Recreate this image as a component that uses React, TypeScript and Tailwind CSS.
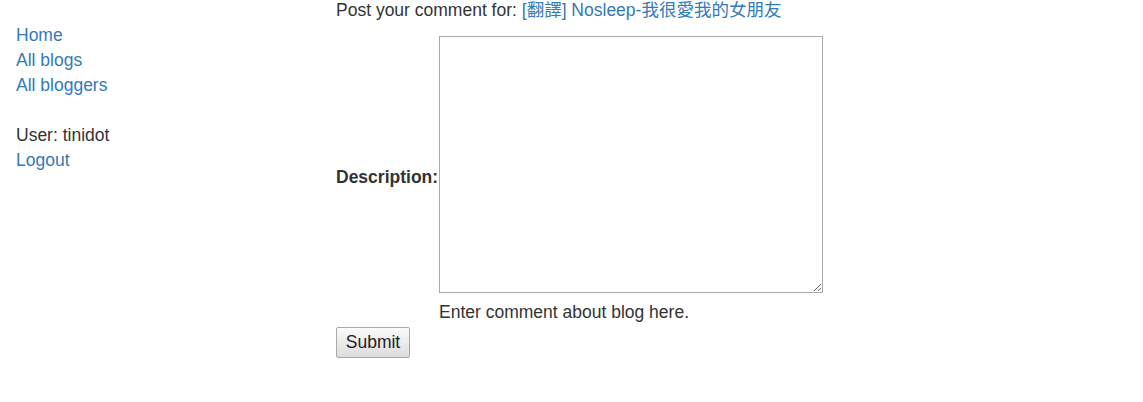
export default function App() {
  return (
    <div className="flex min-h-[402px] bg-white text-[#333] text-[17.5px] leading-[25px] font-['Liberation_Sans','Noto_Sans_CJK_TC',sans-serif]">
      <div className="w-[336px] pl-4 pt-[23px]">
        <ul className="flex flex-col">
          <li><a href="#" className="text-[#337ab7]">Home</a></li>
          <li><a href="#" className="text-[#337ab7]">All blogs</a></li>
          <li><a href="#" className="text-[#337ab7]">All bloggers</a></li>
          <li className="h-[25px]" />
          <li>User: tinidot</li>
          <li><a href="#" className="text-[#337ab7]">Logout</a></li>
        </ul>
      </div>
      <div className="flex flex-col -mt-[2px]">
        <p>
          Post your comment for:{' '}
          <a href="#" className="text-[#337ab7]">[翻譯] Nosleep-我很愛我的女朋友</a>
        </p>
        <div className="flex items-center mt-[13px]">
          <label className="w-[103px] pb-[6px] font-bold">Description:</label>
          <div className="flex flex-col">
            <textarea className="w-[384px] h-[257px] border border-[#a9a9a9] bg-white outline-none" />
            <div className="mt-[7px]">Enter comment about blog here.</div>
          </div>
        </div>
        <div className="mt-[2px]">
          <button className="h-[31px] w-[74px] border border-[#a9a9a9] rounded-[2px] bg-gradient-to-b from-[#fbfbfb] to-[#dcdcdc] text-[#222]">
            Submit
          </button>
        </div>
      </div>
    </div>
  )
}
